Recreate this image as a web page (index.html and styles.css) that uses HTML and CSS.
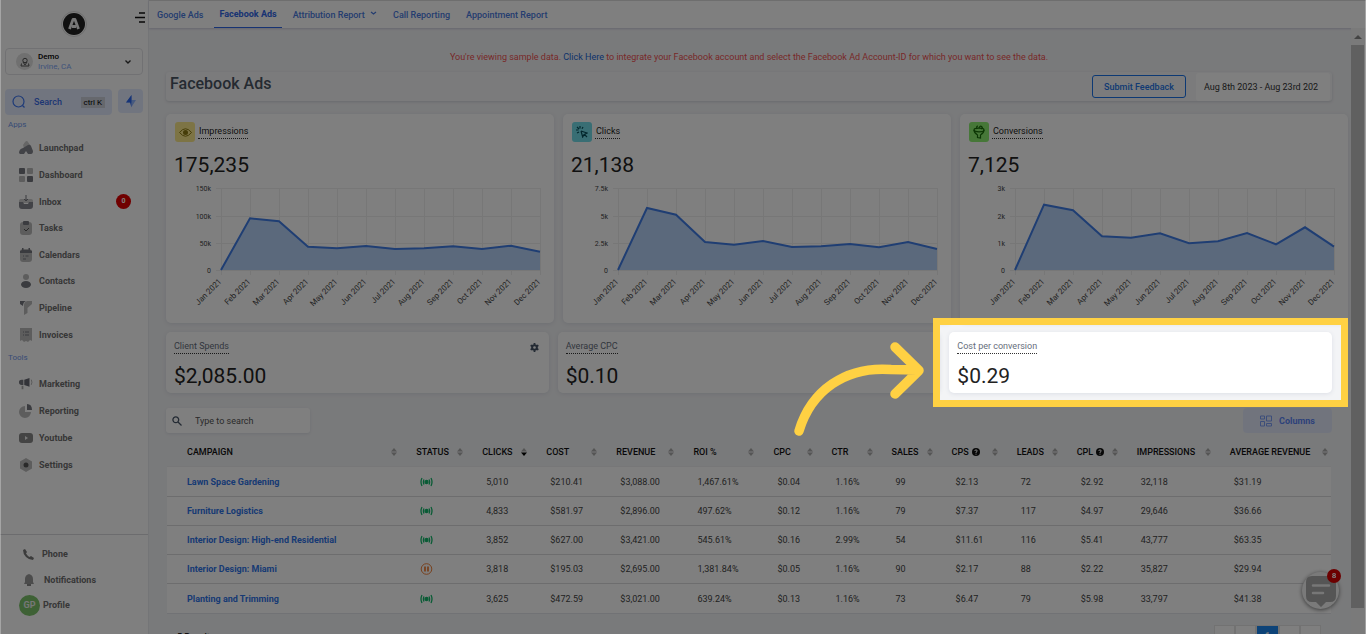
FILE: index.html
```html
<!DOCTYPE html>
<html lang="en">
<head>
<meta charset="utf-8">
<title>Facebook Ads</title>
<link rel="stylesheet" href="styles.css">
</head>
<body>
<aside class="sidebar">
  <div class="brand">
    <svg class="logo" width="26" height="26" viewBox="0 0 26 26"><circle cx="13" cy="13" r="12.500" fill="#fff" stroke="#ddd"/><circle cx="13" cy="13" r="11" fill="#222"/><path d="M8.500 18L12 8.500h2L17.500 18M11 15.500h4" fill="none" stroke="#eee" stroke-width="2.800" stroke-linejoin="round"/></svg>
    <button class="burger" aria-label="Toggle menu"><svg width="11" height="11" viewBox="0 0 11 11" stroke="#111" stroke-width="1.300"><path d="M4 1h6M0 5.500h10M4 10h6"/></svg></button>
  </div>
  <button class="location">
    <span class="pin"><svg width="10" height="10" viewBox="0 0 10 10" fill="none" stroke="#555"><circle cx="5" cy="3.500" r="2.200"/><path d="M3 5l2 3 2-3M1.500 6.500L1 9h8l-.5-2.500"/></svg></span>
    <span class="loc-text"><b>Demo</b><span>Irvine, CA</span></span>
    <svg width="8" height="6" viewBox="0 0 8 6" fill="none" stroke="#333" stroke-width="1.400"><path d="M1.500 1.500L4 4l2.500-2.500"/></svg>
  </button>
  <div class="search-row">
    <button class="side-search"><svg width="14" height="14" viewBox="0 0 14 14" fill="none" stroke="#3b74f0" stroke-width="1.200"><circle cx="6.500" cy="6.500" r="5.500"/><path d="M10.500 10.500l2 2"/></svg><span>Search</span><kbd>ctrl K</kbd></button>
    <button class="bolt" aria-label="Quick actions"><svg width="12" height="13" viewBox="0 0 12 13"><path d="M6.500 0v5H11L6.500 12V7.500H1z" fill="#8fb4ff"/><path d="M6.500 0v12.500L5 7.500H1z" fill="#2c68ee"/></svg></button>
  </div>
  <h2 class="group">Apps</h2>
  <nav class="menu apps">
    <a href="#"><svg viewBox="0 0 14 14"><path d="M4 4l2-3q2-2 3 0l2 3-6 3z" fill="#ccc"/><path d="M0 12q0-4 4-5l5-3q2-1 3 1l2 5q0 3-2 3H9L7 10l-2 3H1z" fill="#85878f"/></svg>Launchpad</a>
    <a href="#"><svg viewBox="0 0 14 14"><rect width="6" height="6" rx="1" fill="#74767e"/><rect x="8" width="6" height="6" rx="1" fill="#bbb"/><rect y="8" width="6" height="6" rx="1" fill="#bbb"/><rect x="8" y="8" width="6" height="6" rx="1" fill="#74767e"/></svg>Dashboard</a>
    <a href="#"><svg viewBox="0 0 14 14"><path d="M0 6q0-2 2-2h10q2 0 2 2v2H0z" fill="#ccc"/><path d="M0 7h4l1 2h4l1-2h4v4q0 3-3 3H3q-3 0-3-3z" fill="#85878f"/><path d="M7 0v6M5 4l2 2 2-2" fill="none" stroke="#74767e"/></svg>Inbox<span class="count">0</span></a>
    <a href="#"><svg viewBox="0 0 14 14"><rect x="1" y="1" width="12" height="13" rx="3" fill="#bbb"/><rect x="4" width="6" height="4" rx="1" fill="#74767e"/><path d="M5 8l2 2 3-3" fill="none" stroke="#555"/></svg>Tasks</a>
    <a href="#"><svg viewBox="0 0 14 14"><rect x="1" y="1" width="12" height="13" rx="3" fill="#bbb"/><path d="M1 5V3l2-1V0h1.500v2h5V0H11v2l2 1v2z" fill="#74767e"/><path d="M4 8h1m1.500 0h3M4 11h3" stroke="#74767e"/></svg>Calendars</a>
    <a href="#"><svg viewBox="0 0 14 14"><circle cx="7" cy="3" r="3" fill="#bbb"/><ellipse cx="7" cy="10.500" rx="5" ry="3.500" fill="#74767e"/></svg>Contacts</a>
    <a href="#"><svg viewBox="0 0 14 14"><path d="M5 4q0-3 3-4h5v3L8.500 7v5L5 14V7z" fill="#bbb"/><path d="M1 0h6Q4 1 4 5L1 3z" fill="#74767e"/></svg>Pipeline</a>
    <a href="#"><svg viewBox="0 0 14 14"><path d="M1 0h12v13l-2-1-2 2-2-1-2 1-2-2-2 1z" fill="#bbb"/><path d="M4 4h1m1 0h4M4 7h1m1 0h4" stroke="#74767e"/></svg>Invoices</a>
  </nav>
  <h2 class="group">Tools</h2>
  <nav class="menu tools">
    <a href="#"><svg viewBox="0 0 16 14"><path d="M0 4q0-2 3-2h2v6H3Q0 8 0 5z" fill="#74767e"/><path d="M6 2l6-2v10L6 8z" fill="#666872"/><path d="M3 9h2v4H3z" fill="#aaa"/><path d="M14 2q1.500 3 0 6" fill="none" stroke="#aaa"/></svg>Marketing</a>
    <a href="#"><svg viewBox="0 0 14 14"><path d="M6 2v6h6a6 6 0 1 1-6-6z" fill="#bbb"/><path d="M8 0q5 0 5 6H8z" fill="#74767e"/></svg>Reporting</a>
    <a href="#"><svg viewBox="0 0 14 14"><rect y="2" width="14" height="10" rx="3" fill="#888"/><path d="M6 5l3 2-3 2z" fill="#eee"/></svg>Youtube</a>
    <a href="#"><svg viewBox="0 0 14 14"><path d="M7 0l6 3.500v7L7 14l-6-3.500v-7z" fill="#bbb"/><circle cx="7" cy="7" r="2.500" fill="#555"/></svg>Settings</a>
  </nav>
  <nav class="account">
    <a class="phone" href="#"><svg width="11" height="11" viewBox="0 0 11 11"><path d="M0 1l2-1 2 3-1 1.500Q5 7.500 6.500 8L8 7l3 2-1 2Q6 11 3 8T0 1z" fill="#777"/></svg>Phone</a>
    <a class="bell" href="#"><svg width="10" height="12" viewBox="0 0 10 12"><path d="M1 8V5q0-4 4-5 4 1 4 5v3l1 2H0z" fill="#999"/><path d="M3 11h4" stroke="#888" stroke-width="2"/></svg>Notifications</a>
    <a class="profile" href="#"><span class="avatar">GP</span>Profile</a>
  </nav>
</aside>

<div class="main">
  <nav class="tabs">
    <a href="#">Google Ads</a>
    <a href="#" class="active">Facebook Ads</a>
    <a href="#">Attribution Report <svg width="7" height="5" viewBox="0 0 7 5" fill="none" stroke="#4a7be0" stroke-width="1.300"><path d="M1 1l2.500 2L6 1"/></svg></a>
    <a href="#">Call Reporting</a>
    <a href="#">Appointment Report</a>
  </nav>
  <div class="body">
    <main class="content">
      <p class="notice">You're viewing sample data. <a href="#">Click Here</a> to integrate your Facebook account and select the Facebook Ad Account-ID for which you want to see the data.</p>
      <header class="titlebar">
        <h1>Facebook Ads</h1>
        <button class="feedback">Submit Feedback</button>
        <input class="dates" aria-label="Date range" value="Aug 8th 2023 - Aug 23rd 202">
      </header>
      <section class="charts">
        <article class="card chart">
          <h3><span class="tile yellow"><svg width="13" height="9" viewBox="0 0 13 9"><path d="M.5 4.500q6-7.500 12 0-6 7.500-12 0z" fill="none" stroke="#8c7a10"/><circle cx="6.500" cy="4.500" r="2.500" fill="#8c7a10"/></svg></span><span class="hint">Impressions</span></h3>
          <p class="figure">175,235</p>
          <svg class="plot" viewBox="0 0 388 142" data-ticks="150k,100k,50k,0" data-points="90,38.3,41.3,66.7,68.3,66,69,68.3,66.3,69,65.7,71.7"></svg>
        </article>
        <article class="card chart">
          <h3><span class="tile cyan"><svg width="12" height="12" viewBox="0 0 12 12" fill="none" stroke="#064e5a" stroke-width="1.200"><path d="M5 5l6 2-2.500 1.300L11 11M5 5l1.700 6 1.300-2.500M4 0v2.500M0 4h2.500M1 1l2 2M7 1L6 2.800M1 7l2-1"/></svg></span><span class="hint">Clicks</span></h3>
          <p class="figure">21,138</p>
          <svg class="plot" viewBox="0 0 388 142" data-ticks="7.5k,5k,2.5k,0" data-points="90,28,34.7,62,64.7,61,67,66.3,64,67.3,62,69"></svg>
        </article>
        <article class="card chart">
          <h3><span class="tile green"><svg width="12" height="14" viewBox="0 0 12 14" fill="none" stroke="#176b08" stroke-width="1.200"><ellipse cx="6" cy="5" rx="5" ry="1.800"/><path d="M1 5q0 3 3.500 5v2.500L7.500 13v-3Q11 8 11 5M4 4q-1-3 1-3M6 3q1-3 3-1 1 1-1 2"/></svg></span><span class="hint">Conversions</span></h3>
          <p class="figure">7,125</p>
          <svg class="plot" viewBox="0 0 388 142" data-ticks="3k,2k,1k,0" data-points="90,24.7,30.3,56.3,57.7,53.3,63.3,61.3,53,64.3,47.3,66.7"></svg>
        </article>
      </section>
      <section class="stats">
        <article class="card stat">
          <div class="stat-head"><span class="hint">Client Spends</span><button class="gear" aria-label="Configure"><svg width="9" height="9" viewBox="0 0 10 10"><circle cx="5" cy="5" r="2.600" fill="none" stroke="#475467" stroke-width="2.200"/><path d="M5 0v2M5 8v2M.7 2.500l1.700 1M7.600 6.500l1.700 1M.7 7.500l1.700-1M7.600 3.500l1.700-1" stroke="#475467" stroke-width="2"/></svg></button></div>
          <p class="figure">$2,085.00</p>
        </article>
        <article class="card stat">
          <div class="stat-head"><span class="hint">Average CPC</span></div>
          <p class="figure">$0.10</p>
        </article>
        <article class="card stat">
          <div class="stat-head"><span class="hint">Cost per conversion</span></div>
          <p class="figure">$0.29</p>
          <div class="spotlight">
            <svg class="arrow" width="136" height="98" viewBox="0 0 136 98" fill="none" stroke="#ffd143" stroke-width="9.500" stroke-linecap="round" stroke-linejoin="round"><path d="M6 91C18 51 52 26 98 29.500L124 30M102 7l24 23.500L102 54"/></svg>
          </div>
        </article>
      </section>
      <div class="toolbar">
        <label class="filter"><svg width="10" height="10" viewBox="0 0 10 10" fill="none" stroke="#475467" stroke-width="1.300"><circle cx="3.800" cy="3.800" r="2.900"/><path d="M6 6l3.500 3.500"/></svg><input type="text" placeholder="Type to search" aria-label="Search campaigns"></label>
        <button class="columns"><svg width="12" height="12" viewBox="0 0 12 12" fill="none" stroke="#7b9cf5"><path d="M.5 1h4v3h-4zM6.500 1h5v5h-5zM.5 6.500h4v4.500h-4zM6.500 8.500h5V11h-5z"/></svg>Columns</button>
      </div>
      <table class="campaigns">
        <colgroup><col class="w-name"><col class="w-status"><col class="w-clicks"><col class="w-cost"><col class="w-rev"><col class="w-roi"><col class="w-cpc"><col class="w-60"><col class="w-60"><col class="w-cps"><col class="w-60"><col class="w-60"><col class="w-imp"><col class="w-avg"></colgroup>
        <thead><tr></tr></thead>
        <tbody></tbody>
      </table>
      <footer class="pager">
        <span class="results">5 Results</span>
        <div class="pages"><button aria-label="First"></button><button aria-label="Previous"></button><button class="current">1</button><button aria-label="Next"></button><button aria-label="Last"></button></div>
      </footer>
    </main>
    <div class="scrollbar"><span class="up"></span><span class="thumb"></span></div>
  </div>
</div>
<button class="chat" aria-label="Open chat"><svg width="32" height="32" viewBox="0 0 32 32"><path d="M7 1h18q6 0 6 6v14q0 6-6 6h-4l-5 5-5-5H7q-6 0-6-6V7q0-6 6-6z" fill="#aaa"/><path d="M8 10.500h16M8 18h10" stroke="#eee" stroke-width="2.500" stroke-linecap="round"/></svg><span class="chat-count">8</span></button>
<script src="app.js"></script>
</body>
</html>
```
FILE: styles.css
```css
* { box-sizing: border-box; }
body { margin: 0; height: 100vh; display: flex; overflow: hidden; font: 9px/14px Roboto, sans-serif; color: #222; background: #f3f4f6; }
body::after { content: ""; position: fixed; inset: 0; z-index: 60; pointer-events: none; border: solid rgba(255, 255, 255, .3); border-width: 0 1px; }
h1, h2, h3, p { margin: 0; font-weight: 400; }
button, input { font: inherit; color: inherit; border: 0; background: none; padding: 0; }
a { text-decoration: none; color: inherit; }
svg { flex: none; }

.sidebar { flex: none; width: 149px; height: 100vh; padding: 0 5px; display: flex; flex-direction: column; background: #fff; border-right: 1px solid #e8eaee; }
.brand { height: 48px; display: grid; grid-template-columns: 1fr 26px 1fr; align-items: center; }
.logo { grid-column: 2; }
.burger { justify-self: end; align-self: start; margin: 12px -3px 0 0; line-height: 0; }
.location { height: 27px; padding: 0 10px; display: flex; align-items: center; gap: 5px; border: 1px solid #e3e3e6; border-radius: 4px; text-align: left; }
.pin { width: 17px; height: 17px; border-radius: 50%; background: #e0e0e0; display: grid; place-items: center; }
.loc-text { flex: 1; display: grid; font-size: 8px; line-height: 10px; color: #7fa6f5; }
.loc-text b { color: #000; font-weight: 500; }
.search-row { display: flex; gap: 6px; margin-top: 14px; height: 26px; }
.side-search { flex: 1; display: flex; align-items: center; padding: 0 7px; border-radius: 4px; background: #e3ebff; color: #3b6de8; font-weight: 500; }
.side-search span { margin-left: 8px; }
kbd { margin-left: auto; padding: 0 3px; font: 8px/11px Roboto, sans-serif; background: #ccd0db; color: #000; }
.bolt { width: 25px; height: 24px; border-radius: 4px; background: #e3ebff; display: grid; place-items: center; }
.group { margin: 4px 0 0 3px; font-size: 8px; line-height: 12px; color: #6f97ec; }
.menu { display: grid; grid-auto-rows: 1fr; }
.apps { height: 213px; margin-top: 4px; }
.tools { height: 107px; margin-top: 7px; }
.menu a, .account a { display: flex; align-items: center; color: #6e6e6e; font-weight: 700; }
.menu a { padding: 0 12px 0 14px; gap: 6px; }
.menu svg { width: 14px; height: 14px; }
.count { margin-left: auto; width: 15px; height: 15px; border-radius: 50%; background: #e00000; color: #fff; font-size: 7px; line-height: 15px; text-align: center; }
.account { margin: auto -5px 0; height: 100px; padding: 6px 0 0 19px; border-top: 1px solid #d8d8dc; }
.account a { height: 26px; }
.phone { padding-left: 4px; gap: 8px; }
.bell { padding-left: 5px; gap: 10px; }
.account .profile { gap: 3px; height: 24px; }
.avatar { width: 21px; height: 21px; border-radius: 50%; background: #7cc36b; color: #eee; font-size: 9px; line-height: 21px; text-align: center; }

.main { flex: 1; min-width: 0; }
.tabs { height: 28px; display: flex; gap: 16px; padding-left: 8px; background: #fff; color: #4a7be0; line-height: 28px; border-top: 1px solid #ddd; box-shadow: 0 1px 2px #ccd; }
.tabs a { font-weight: 500; }
.tabs .active { padding: 0 5px; margin: 0 -5px; border-bottom: 1px solid #2f66e6; color: #2f66e6; font-weight: 700; line-height: 26px; }
.tabs svg { margin: 0 0 2px 3px; }
.body { display: flex; align-items: flex-start; }
.content { flex: 1; min-width: 0; padding: 22px 19px 0 17px; }
.notice { text-align: center; color: #f05252; }
.notice a { color: #1a66d6; }
.titlebar { display: flex; align-items: center; height: 29px; margin-top: 8px; padding: 0 2px 0 4px; border-radius: 3px; background: #f6f7f9; box-shadow: 0 1px 3px #d0d3da; }
h1 { flex: 1; font-size: 16px; line-height: 20px; font-weight: 500; color: #4b5563; padding-bottom: 6px; }
.feedback { width: 94px; height: 23px; border: 1px solid #1a73e8; border-radius: 3px; color: #2474e8; font-weight: 500; }
.dates { width: 134px; height: 28px; margin-left: 10px; padding: 0 8px; background: #fff; border-radius: 3px; color: #333; }
.card { background: #fff; border-radius: 5px; box-shadow: 0 1px 4px #dcdfe6; }
.charts { display: grid; grid-template-columns: repeat(3, 1fr); gap: 9px; margin: 13px -16px 0 0; }
.chart { height: 209px; }
.chart h3 { display: flex; align-items: center; gap: 3px; padding: 8px 9px 0; font-size: 9px; }
.tile { width: 20px; height: 20px; border-radius: 3px; display: grid; place-items: center; }
.yellow { background: #fbe98a; }
.cyan { background: #72dce8; }
.green { background: #8cef70; }
.hint { border-bottom: 1px dotted #333; line-height: 13px; padding-left: 1px; }
.figure { font-size: 21px; line-height: 26px; }
.chart .figure { padding: 10px 8px 2px; }
.plot { display: block; width: 100%; }
.plot text { font-size: 8px; fill: #444; text-anchor: end; }
.plot .tick { font-size: 7px; }
.grid { stroke: #eee; }
.area { fill: #b7d2f8; }
.line { fill: none; stroke: #3f7ce6; stroke-width: 2; }
.stats { display: grid; grid-template-columns: repeat(3, 1fr); gap: 9px; margin-top: 9px; }
.stat { position: relative; height: 61px; padding: 8px 8px 0; }
.stat-head { display: flex; justify-content: space-between; color: #666e7c; padding-right: 2px; }
.stat-head .hint { padding-left: 0; }
.stat .figure { margin-top: 9px; }
.gear { line-height: 0; }
.spotlight { position: absolute; inset: -14px -16px; z-index: 50; border: 7px solid #ffd143; box-shadow: 0 0 0 9999px rgba(0, 0, 0, .5); pointer-events: none; }
.arrow { position: absolute; top: 15px; right: calc(100% + 11px); }
.toolbar { display: flex; justify-content: space-between; margin-top: 15px; height: 25px; }
.filter { width: 144px; display: flex; align-items: center; gap: 13px; padding: 0 6px; background: #fff; border-radius: 3px; box-shadow: 0 1px 3px #dcdfe6; }
.filter input { flex: 1; min-width: 0; }
.filter input::placeholder { color: #555; opacity: 1; }
.columns { width: 89px; border-radius: 4px; background: #e3e9fb; color: #5b84f5; font-weight: 700; display: flex; align-items: center; justify-content: center; gap: 7px; }
.campaigns { width: 100%; table-layout: fixed; border-collapse: separate; border-spacing: 0; margin-top: 4px; padding: 0 1px; }
.w-name { width: 233px; } .w-status { width: 66px; } .w-clicks { width: 64px; } .w-cost { width: 70px; }
.w-rev { width: 77px; } .w-roi { width: 80px; } .w-cpc { width: 58px; } .w-60 { width: 60px; }
.w-cps { width: 65px; } .w-imp { width: 93px; } .w-avg { width: 117px; }
.campaigns th { height: 29px; padding: 0 3px 0 16px; font-size: 9px; line-height: 12px; font-weight: 500; text-align: left; color: #111; white-space: nowrap; }
.campaigns th:first-child { padding-left: 20px; }
.th { display: flex; align-items: center; gap: 3px; }
.sort { margin-left: auto; }
.campaigns td { height: 29px; padding: 0 0 0 20px; background: #fff; border-top: 1px solid #dadadd; font-size: 9px; line-height: 12px; color: #444; }
.campaigns tbody tr:first-child td { height: 30px; border-top-color: #eeeff1; }
.campaigns tbody tr:last-child td { height: 31px; border-bottom: 1px solid #e3e5ea; }
.campaigns td a { color: #2f74e8; font-weight: 700; }
.campaigns td svg { display: block; }
.pager { display: flex; justify-content: space-between; align-items: flex-start; padding: 11px 11px 0; font-weight: 500; line-height: 14px; }
.results { padding-top: 5px; }
.pages { display: flex; }
.pages button { width: 21px; height: 22px; background: #fff; border: 1px solid #e5e5e5; }
.pages .current { width: 23px; background: #1a86f0; color: #fff; }
.scrollbar { flex: none; width: 15px; height: calc(100vh - 28px); background: #f4f4f4; display: flex; flex-direction: column; align-items: center; padding: 7px 2px 26px 0; }
.up { border: solid transparent; border-width: 0 4px 4px; border-bottom-color: #888; }
.thumb { flex: 1; width: 13px; margin-top: 6px; background: #c1c1c1; }
.chat { position: fixed; right: 27px; bottom: 25px; width: 37px; height: 37px; border-radius: 50%; background: #f4f4f4; box-shadow: 0 1px 4px #777; display: grid; place-items: center; z-index: 5; }
.chat-count { position: absolute; top: -3px; right: -2px; width: 14px; height: 14px; border-radius: 50%; background: #d80000; color: #fff; font-size: 8px; font-weight: 700; line-height: 14px; }
```
FILE: app.js
```js
const months = "Jan,Feb,Mar,Apr,May,Jun,Jul,Aug,Sep,Oct,Nov,Dec".split(",");
const columnX = (i) => 55 + i * 29;

document.querySelectorAll(".plot").forEach((plot) => {
  const rows = [8, 36, 63, 90];
  const ticks = plot.dataset.ticks.split(",");
  const pts = plot.dataset.points.split(",").map((y, i) => `${columnX(i)},${y}`).join(" ");
  let out = "";
  rows.forEach((y, i) => {
    out += `<path class="grid" d="M50 ${y}.5H374"/><text class="tick" x="45" y="${y + 3}">${ticks[i]}</text>`;
  });
  months.forEach((m, i) => {
    const x = columnX(i);
    out += `<path class="grid" d="M${x}.5 8V95"/><text transform="translate(${x + 1} 102) rotate(-45)">${m} 2021</text>`;
  });
  out += `<polygon class="area" points="${pts} 374,90"/><polyline class="line" points="${pts}"/>`;
  plot.innerHTML = out;
});

const heads = ["CAMPAIGN", "STATUS", "CLICKS", "COST", "REVENUE", "ROI %", "CPC", "CTR", "SALES", "CPS", "LEADS", "CPL", "IMPRESSIONS", "AVERAGE REVENUE"];
const help = '<svg width="8" height="8" viewBox="0 0 8 8"><circle cx="4" cy="4" r="4" fill="#111"/><path d="M2.800 3Q3 1.800 4 1.800T5.200 3Q5.200 3.600 4 4.200V5M4 5.700v1" fill="none" stroke="#fff"/></svg>';
const sort = (on) => `<svg class="sort" width="6" height="8" viewBox="0 0 6 8"><path d="M0 3.500L3 0l3 3.500z" fill="#aaa"/><path d="M0 4.500L3 8l3-3.500z" fill="${on ? "#000" : "#aaa"}"/></svg>`;
document.querySelector(".campaigns thead tr").innerHTML = heads.map((h) =>
  `<th scope="col"><div class="th">${h}${h === "CPS" || h === "CPL" ? help : ""}${sort(h === "CLICKS")}</div></th>`).join("");

const live = '<svg width="13" height="10" viewBox="0 0 13 10" role="img" aria-label="Active" fill="none" stroke="#12b76a" stroke-width="1.300"><circle cx="6.500" cy="5" r="1.500" fill="#12b76a"/><path d="M4 2.500Q2.800 5 4 7.500M9 2.500q1.200 2.500 0 5M2 1Q0 5 2 9M11 1q2 4 0 8"/></svg>';
const paused = '<svg width="13" height="12" viewBox="0 0 13 12" role="img" aria-label="Paused" fill="none" stroke="#f0823c"><circle cx="6.500" cy="6" r="5.300"/><path d="M5 3.500v5M8 3.500v5" stroke-width="1.800"/></svg>';
const campaigns = [
  ["Lawn Space Gardening", live, "5,010", "$210.41", "$3,088.00", "1,467.61%", "$0.04", "1.16%", "99", "$2.13", "72", "$2.92", "32,118", "$31.19"],
  ["Furniture Logistics", live, "4,833", "$581.97", "$2,896.00", "497.62%", "$0.12", "1.16%", "79", "$7.37", "117", "$4.97", "29,646", "$36.66"],
  ["Interior Design: High-end Residential", live, "3,852", "$627.00", "$3,421.00", "545.61%", "$0.16", "2.99%", "54", "$11.61", "116", "$5.41", "43,777", "$63.35"],
  ["Interior Design: Miami", paused, "3,818", "$195.03", "$2,695.00", "1,381.84%", "$0.05", "1.16%", "90", "$2.17", "88", "$2.22", "35,827", "$29.94"],
  ["Planting and Trimming", live, "3,625", "$472.59", "$3,021.00", "639.24%", "$0.13", "1.16%", "73", "$6.47", "79", "$5.98", "33,797", "$41.38"],
];
document.querySelector(".campaigns tbody").innerHTML = campaigns.map(([name, ...rest]) =>
  `<tr><td><a href="#">${name}</a></td>${rest.map((v) => `<td>${v}</td>`).join("")}</tr>`).join("");
```
